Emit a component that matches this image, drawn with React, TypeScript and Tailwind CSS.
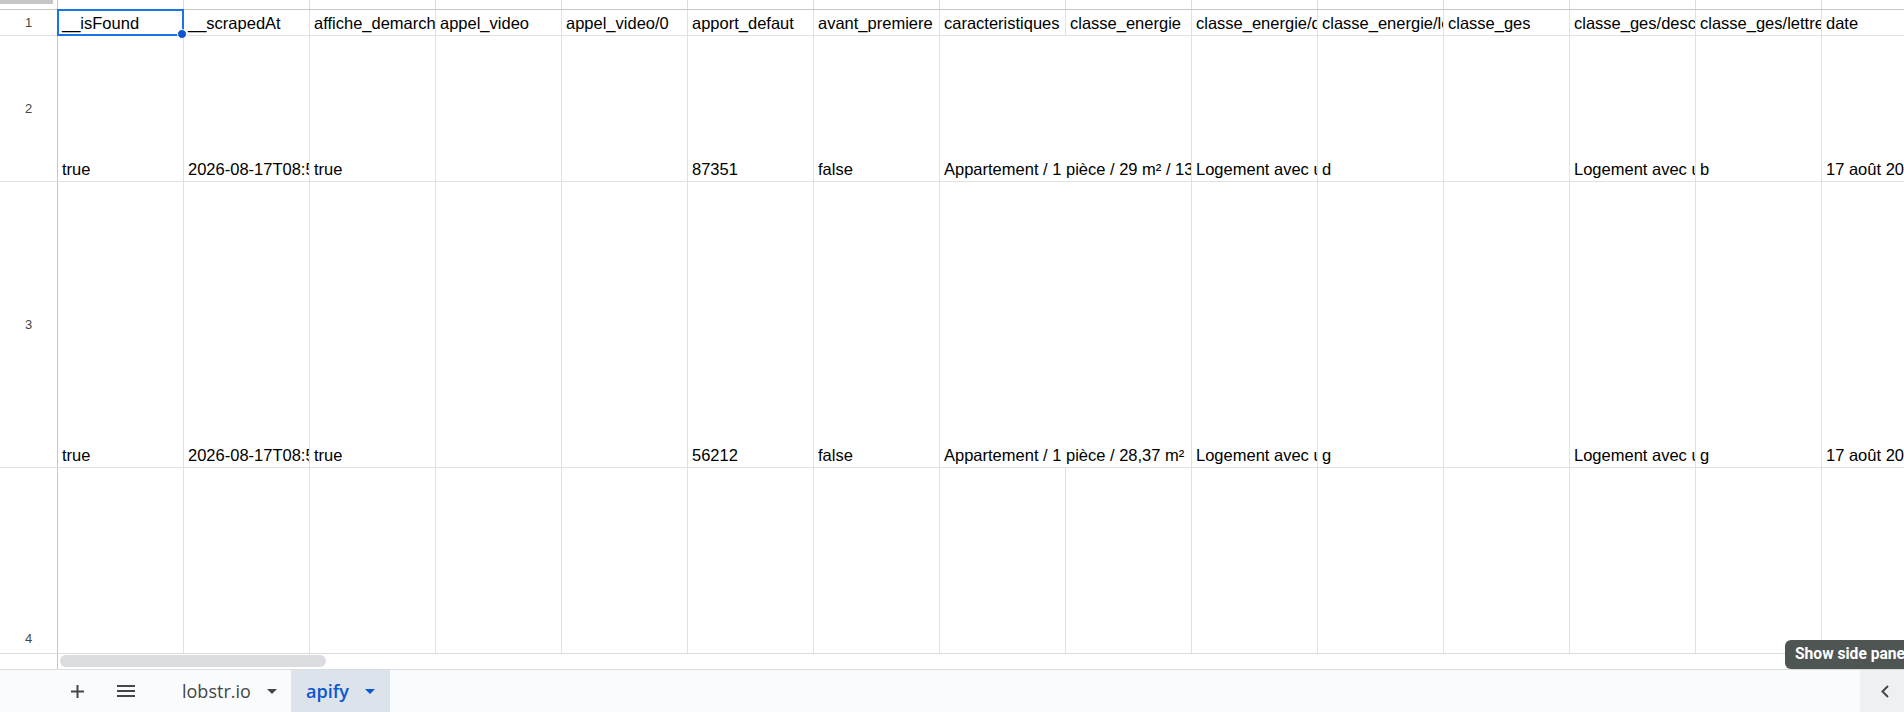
import React from "react";

type Cell = { t?: string; span?: number };

const HEADERS = [
  "__isFound",
  "__scrapedAt",
  "affiche_demarche",
  "appel_video",
  "appel_video/0",
  "apport_defaut",
  "avant_premiere",
  "caracteristiques",
  "classe_energie",
  "classe_energie/description",
  "classe_energie/lettre",
  "classe_ges",
  "classe_ges/description",
  "classe_ges/lettre",
  "date",
];

const ROWS: { n: number; h: string; cells: Cell[] }[] = [
  {
    n: 2,
    h: "h-[146px]",
    cells: [
      { t: "true" },
      { t: "2026-08-17T08:55:41.512Z" },
      { t: "true" },
      {},
      {},
      { t: "87351" },
      { t: "false" },
      { t: "Appartement / 1 pièce / 29 m² / 13e étage", span: 2 },
      { t: "Logement avec une consommation énergétique modérée" },
      { t: "d" },
      {},
      { t: "Logement avec une faible émission de gaz" },
      { t: "b" },
      { t: "17 août 2026" },
    ],
  },
  {
    n: 3,
    h: "h-[286px]",
    cells: [
      { t: "true" },
      { t: "2026-08-17T08:55:43.907Z" },
      { t: "true" },
      {},
      {},
      { t: "56212" },
      { t: "false" },
      { t: "Appartement / 1 pièce / 28,37 m²", span: 2 },
      { t: "Logement avec une consommation énergétique très élevée" },
      { t: "g" },
      {},
      { t: "Logement avec une forte émission de gaz" },
      { t: "g" },
      { t: "17 août 2026" },
    ],
  },
  {
    n: 4,
    h: "h-[342px]",
    cells: Array.from({ length: 15 }, () => ({})),
  },
];

const cellFont = { fontFamily: '"Liberation Sans", Arial, sans-serif' };

function RowNumber({ n }: { n: number }) {
  return (
    <div
      className="w-[58px] shrink-0 h-full flex items-center justify-center border-r border-[#c4c7c5] text-[13px] text-[#444746]"
      style={cellFont}
    >
      {n}
    </div>
  );
}

function DataCell({ cell }: { cell: Cell }) {
  const wide = (cell.span ?? 1) === 2;
  return (
    <div
      className={`${wide ? "w-[252px]" : "w-[126px]"} shrink-0 h-full border-r border-[#e1e1e1] flex items-end`}
    >
      <div
        className="w-full overflow-hidden whitespace-nowrap pl-[4px] pb-[2px] leading-[20px] text-[16.5px] text-black"
        style={cellFont}
      >
        {cell.t ?? ""}
      </div>
    </div>
  );
}

function Caret({ color }: { color: string }) {
  return (
    <svg width="10" height="5" viewBox="0 0 10 5">
      <path d="M0 0 L10 0 L5 5 Z" fill={color} />
    </svg>
  );
}

export default function App() {
  return (
    <div className="relative w-[1904px] h-[712px] overflow-hidden bg-white flex flex-col">
      {/* sheet grid */}
      <div className="h-[654px] shrink-0 overflow-hidden border-b border-[#dadce0]">
        {/* column header strip */}
        <div className="flex h-[10px] border-b border-[#c4c7c5]">
          <div className="w-[58px] shrink-0 h-full border-r border-[#c4c7c5]">
            <div className="w-[53px] h-[4px] bg-[#c4c7c5]" />
          </div>
          {HEADERS.map((_, i) => (
            <div key={i} className="w-[126px] shrink-0 h-full border-r border-[#dadce0]" />
          ))}
        </div>

        {/* row 1: field names */}
        <div className="flex h-[26px] border-b border-[#e1e1e1]">
          <RowNumber n={1} />
          {HEADERS.map((h, i) => (
            <div
              key={h}
              className="relative w-[126px] shrink-0 h-full border-r border-[#e1e1e1] flex items-end"
            >
              <div
                className="w-full overflow-hidden whitespace-nowrap pl-[4px] pb-[2px] leading-[20px] text-[16.5px] text-black"
                style={cellFont}
              >
                {h}
              </div>
              {i === 0 && (
                <div className="absolute left-[-1px] top-[-1px] w-[127px] h-[27px] border-2 border-[#1a73e8] z-10">
                  <div className="absolute right-[-5px] bottom-[-5px] w-[10px] h-[10px] rounded-full bg-[#0b57d0] border border-white" />
                </div>
              )}
            </div>
          ))}
        </div>

        {ROWS.map((r) => (
          <div key={r.n} className={`flex ${r.h} border-b border-[#e1e1e1]`}>
            <RowNumber n={r.n} />
            {r.cells.map((c, i) => (
              <DataCell key={i} cell={c} />
            ))}
          </div>
        ))}
      </div>

      {/* horizontal scrollbar */}
      <div className="h-[15px] shrink-0 flex">
        <div className="w-[58px] shrink-0 h-full border-r border-[#c4c7c5]" />
        <div className="ml-[2px] mt-[1px] w-[266px] h-[12px] rounded-full bg-[#dadce0]" />
      </div>

      {/* sheet tabs bar */}
      <div
        className="h-[43px] shrink-0 border-t border-[#dadce0] bg-[#f9fbfd] flex items-stretch"
        style={{ fontFamily: '"Open Sans", Roboto, sans-serif' }}
      >
        <div className="w-[61px] shrink-0" />
        <div className="w-[32px] shrink-0 flex items-center justify-center">
          <svg width="13" height="13" viewBox="0 0 13 13">
            <path d="M6.5 0 V13 M0 6.5 H13" stroke="#444746" strokeWidth="2" />
          </svg>
        </div>
        <div className="w-[17px] shrink-0" />
        <div className="w-[32px] shrink-0 flex items-center justify-center">
          <svg width="18" height="12" viewBox="0 0 18 12">
            <path d="M0 1 H18 M0 6 H18 M0 11 H18" stroke="#444746" strokeWidth="2" />
          </svg>
        </div>
        <div className="w-[25px] shrink-0" />
        <div className="w-[124px] shrink-0 flex items-center justify-between pl-[15px] pr-[14px] text-[18px] font-medium text-[#444746]">
          <span>lobstr.io</span>
          <Caret color="#444746" />
        </div>
        <div className="w-[99px] shrink-0 flex items-center justify-between pl-[15px] pr-[15px] bg-[#dde3ea] text-[18px] font-semibold text-[#0b57d0]">
          <span>apify</span>
          <Caret color="#0b57d0" />
        </div>
        <div className="ml-auto w-[44px] shrink-0 bg-[#eff0f1] flex items-center justify-center pl-[6px]">
          <svg width="8" height="13" viewBox="0 0 8 13">
            <path d="M7 1 L1.5 6.5 L7 12" stroke="#444746" strokeWidth="2" fill="none" />
          </svg>
        </div>
      </div>

      {/* tooltip for the side panel toggle */}
      <div
        className="absolute left-[1785px] top-[640px] h-[29px] w-[160px] rounded-[6px] bg-[#4f5553] flex items-center pl-[10px] text-white text-[15.6px] font-bold whitespace-nowrap"
        style={{ fontFamily: "Roboto, sans-serif" }}
      >
        Show side panel
      </div>
    </div>
  );
}
